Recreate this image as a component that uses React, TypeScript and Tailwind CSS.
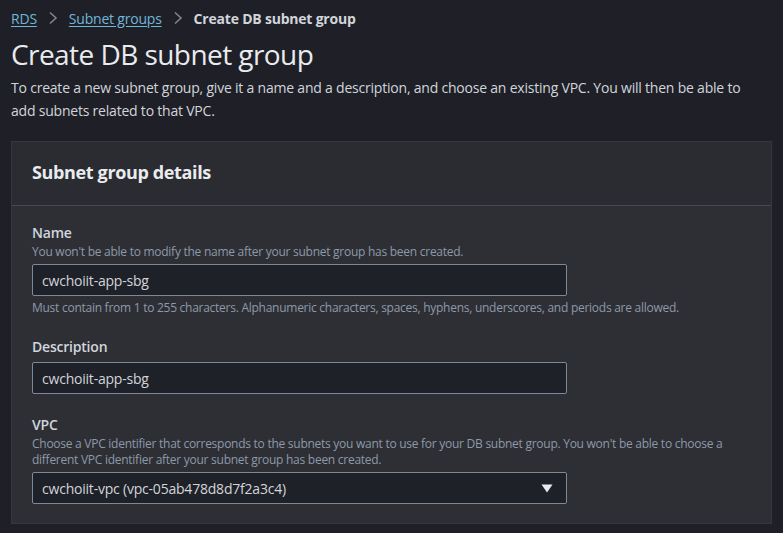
import React from 'react';

const FONT = "font-['Open_Sans',sans-serif]";

function Field({ label, help, value, constraint, select }: { label: string; help?: string; value: string; constraint?: string; select?: boolean }) {
  return (
    <div className="flex flex-col">
      <span className="text-[14px] leading-[22px] font-semibold text-[#d1d5db] tracking-[-0.015em]">{label}</span>
      {help && <p className="text-[12px] leading-[16px] text-[#8d99a8] tracking-[-0.022em]">{help}</p>}
      <div className="mt-1 w-[535px] h-8 flex items-center justify-between px-[9px] bg-[#1f2128] border border-[#7d8998] rounded-[2px]">
        <span className="text-[14px] text-[#d1d5db] tracking-[-0.015em]">{value}</span>
        {select && (
          <svg width="12" height="9" viewBox="0 0 12 9" className="mr-[4px]">
            <path d="M0.5 0.5 H11.5 L6 8.5 Z" fill="#e9ebed" />
          </svg>
        )}
      </div>
      {constraint && <p className="mt-1 text-[12px] leading-[16px] text-[#8d99a8] tracking-[-0.022em]">{constraint}</p>}
    </div>
  );
}

export default function App() {
  return (
    <div className={`${FONT} min-h-screen w-full bg-[#1f2027] px-[11px] pt-[7px] pb-[10px]`}>
      <nav className="flex items-center h-[22px] text-[14px] tracking-[-0.015em]">
        <a className="text-[#6fb6d9] underline underline-offset-2">RDS</a>
        <svg width="10" height="14" viewBox="0 0 10 14" className="mx-[11px]">
          <path d="M2 1.5 L8 7 L2 12.5" stroke="#7d8590" strokeWidth="1.6" fill="none" />
        </svg>
        <a className="text-[#6fb6d9] underline underline-offset-2">Subnet groups</a>
        <svg width="10" height="14" viewBox="0 0 10 14" className="mx-[11px]">
          <path d="M2 1.5 L8 7 L2 12.5" stroke="#7d8590" strokeWidth="1.6" fill="none" />
        </svg>
        <span className="font-bold text-[#d1d5db]">Create DB subnet group</span>
      </nav>
      <h1 className="mt-[7px] text-[28px] leading-[36px] text-[#e9ebed] font-normal tracking-[-0.02em]">Create DB subnet group</h1>
      <p className="mt-[4px] max-w-[748px] text-[14px] leading-[23px] text-[#d1d5db] tracking-[-0.015em]">
        To create a new subnet group, give it a name and a description, and choose an existing VPC. You will then be able to add subnets related to that VPC.
      </p>
      <section className="mt-[19px] bg-[#2d2f35] border border-[#34373e]">
        <div className="h-[64px] pt-[18px] px-[20px] bg-[#2a2c32] border-b border-[#444952]">
          <h2 className="text-[18px] leading-[24px] font-bold text-[#e9ebed] tracking-[-0.02em]">Subnet group details</h2>
        </div>
        <div className="px-[20px] pt-[16px] pb-[19px] flex flex-col gap-[20px]">
          <Field
            label="Name"
            help="You won't be able to modify the name after your subnet group has been created."
            value="cwchoiit-app-sbg"
            constraint="Must contain from 1 to 255 characters. Alphanumeric characters, spaces, hyphens, underscores, and periods are allowed."
          />
          <Field label="Description" value="cwchoiit-app-sbg" />
          <Field
            label="VPC"
            help="Choose a VPC identifier that corresponds to the subnets you want to use for your DB subnet group. You won't be able to choose a different VPC identifier after your subnet group has been created."
            value="cwchoiit-vpc (vpc-05ab478d8d7f2a3c4)"
            select
          />
        </div>
      </section>
    </div>
  );
}
